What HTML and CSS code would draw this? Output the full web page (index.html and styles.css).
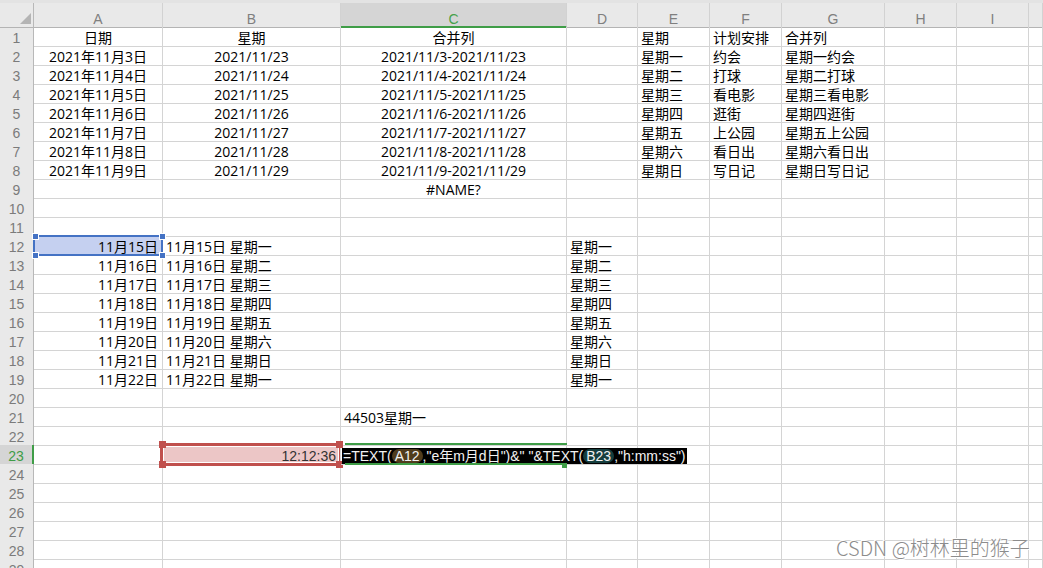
FILE: index.html
```html
<!DOCTYPE html>
<html lang="zh-CN">
<head>
<meta charset="utf-8">
<title>Sheet</title>
<link rel="stylesheet" href="styles.css">
</head>
<body>
<div class="sheet">
  <div class="topbar"></div>
  <div class="row head">
    <div class="hc corner"><svg class="tri" width="34" height="24" viewBox="0 0 34 24"><polygon points="31,10 31,21 20,21" fill="#b4b4b4"/></svg></div>
    <div class="hc">A</div><div class="hc">B</div><div class="hc sel">C</div><div class="hc">D</div><div class="hc">E</div><div class="hc">F</div><div class="hc">G</div><div class="hc">H</div><div class="hc">I</div><div class="hc"></div>
  </div>
  <div class="row"><div class="rh">1</div><div class="c ctr">日期</div><div class="c ctr">星期</div><div class="c ctr">合并列</div><div class="c"></div><div class="c">星期</div><div class="c">计划安排</div><div class="c">合并列</div><div class="c"></div><div class="c"></div><div class="c"></div></div>
  <div class="row"><div class="rh">2</div><div class="c ctr">2021年11月3日</div><div class="c ctr">2021/11/23</div><div class="c ctr">2021/11/3-2021/11/23</div><div class="c"></div><div class="c">星期一</div><div class="c">约会</div><div class="c">星期一约会</div><div class="c"></div><div class="c"></div><div class="c"></div></div>
  <div class="row"><div class="rh">3</div><div class="c ctr">2021年11月4日</div><div class="c ctr">2021/11/24</div><div class="c ctr">2021/11/4-2021/11/24</div><div class="c"></div><div class="c">星期二</div><div class="c">打球</div><div class="c">星期二打球</div><div class="c"></div><div class="c"></div><div class="c"></div></div>
  <div class="row"><div class="rh">4</div><div class="c ctr">2021年11月5日</div><div class="c ctr">2021/11/25</div><div class="c ctr">2021/11/5-2021/11/25</div><div class="c"></div><div class="c">星期三</div><div class="c">看电影</div><div class="c">星期三看电影</div><div class="c"></div><div class="c"></div><div class="c"></div></div>
  <div class="row"><div class="rh">5</div><div class="c ctr">2021年11月6日</div><div class="c ctr">2021/11/26</div><div class="c ctr">2021/11/6-2021/11/26</div><div class="c"></div><div class="c">星期四</div><div class="c">逛街</div><div class="c">星期四逛街</div><div class="c"></div><div class="c"></div><div class="c"></div></div>
  <div class="row"><div class="rh">6</div><div class="c ctr">2021年11月7日</div><div class="c ctr">2021/11/27</div><div class="c ctr">2021/11/7-2021/11/27</div><div class="c"></div><div class="c">星期五</div><div class="c">上公园</div><div class="c">星期五上公园</div><div class="c"></div><div class="c"></div><div class="c"></div></div>
  <div class="row"><div class="rh">7</div><div class="c ctr">2021年11月8日</div><div class="c ctr">2021/11/28</div><div class="c ctr">2021/11/8-2021/11/28</div><div class="c"></div><div class="c">星期六</div><div class="c">看日出</div><div class="c">星期六看日出</div><div class="c"></div><div class="c"></div><div class="c"></div></div>
  <div class="row"><div class="rh">8</div><div class="c ctr">2021年11月9日</div><div class="c ctr">2021/11/29</div><div class="c ctr">2021/11/9-2021/11/29</div><div class="c"></div><div class="c">星期日</div><div class="c">写日记</div><div class="c">星期日写日记</div><div class="c"></div><div class="c"></div><div class="c"></div></div>
  <div class="row"><div class="rh">9</div><div class="c"></div><div class="c"></div><div class="c ctr">#NAME?</div><div class="c"></div><div class="c"></div><div class="c"></div><div class="c"></div><div class="c"></div><div class="c"></div><div class="c"></div></div>
  <div class="row"><div class="rh">10</div><div class="c"></div><div class="c"></div><div class="c"></div><div class="c"></div><div class="c"></div><div class="c"></div><div class="c"></div><div class="c"></div><div class="c"></div><div class="c"></div></div>
  <div class="row"><div class="rh">11</div><div class="c"></div><div class="c"></div><div class="c"></div><div class="c"></div><div class="c"></div><div class="c"></div><div class="c"></div><div class="c"></div><div class="c"></div><div class="c"></div></div>
  <div class="row"><div class="rh">12</div><div class="c r selcell"><div class="selbox"><i class="h h1"></i><i class="h h2"></i><i class="h h3"></i><i class="h h4"></i></div><span class="txt">11月15日</span></div><div class="c">11月15日 星期一</div><div class="c"></div><div class="c">星期一</div><div class="c"></div><div class="c"></div><div class="c"></div><div class="c"></div><div class="c"></div><div class="c"></div></div>
  <div class="row"><div class="rh">13</div><div class="c r">11月16日</div><div class="c">11月16日 星期二</div><div class="c"></div><div class="c">星期二</div><div class="c"></div><div class="c"></div><div class="c"></div><div class="c"></div><div class="c"></div><div class="c"></div></div>
  <div class="row"><div class="rh">14</div><div class="c r">11月17日</div><div class="c">11月17日 星期三</div><div class="c"></div><div class="c">星期三</div><div class="c"></div><div class="c"></div><div class="c"></div><div class="c"></div><div class="c"></div><div class="c"></div></div>
  <div class="row"><div class="rh">15</div><div class="c r">11月18日</div><div class="c">11月18日 星期四</div><div class="c"></div><div class="c">星期四</div><div class="c"></div><div class="c"></div><div class="c"></div><div class="c"></div><div class="c"></div><div class="c"></div></div>
  <div class="row"><div class="rh">16</div><div class="c r">11月19日</div><div class="c">11月19日 星期五</div><div class="c"></div><div class="c">星期五</div><div class="c"></div><div class="c"></div><div class="c"></div><div class="c"></div><div class="c"></div><div class="c"></div></div>
  <div class="row"><div class="rh">17</div><div class="c r">11月20日</div><div class="c">11月20日 星期六</div><div class="c"></div><div class="c">星期六</div><div class="c"></div><div class="c"></div><div class="c"></div><div class="c"></div><div class="c"></div><div class="c"></div></div>
  <div class="row"><div class="rh">18</div><div class="c r">11月21日</div><div class="c">11月21日 星期日</div><div class="c"></div><div class="c">星期日</div><div class="c"></div><div class="c"></div><div class="c"></div><div class="c"></div><div class="c"></div><div class="c"></div></div>
  <div class="row"><div class="rh">19</div><div class="c r">11月22日</div><div class="c">11月22日 星期一</div><div class="c"></div><div class="c">星期一</div><div class="c"></div><div class="c"></div><div class="c"></div><div class="c"></div><div class="c"></div><div class="c"></div></div>
  <div class="row"><div class="rh">20</div><div class="c"></div><div class="c"></div><div class="c"></div><div class="c"></div><div class="c"></div><div class="c"></div><div class="c"></div><div class="c"></div><div class="c"></div><div class="c"></div></div>
  <div class="row"><div class="rh">21</div><div class="c"></div><div class="c"></div><div class="c">44503星期一</div><div class="c"></div><div class="c"></div><div class="c"></div><div class="c"></div><div class="c"></div><div class="c"></div><div class="c"></div></div>
  <div class="row"><div class="rh">22</div><div class="c"></div><div class="c"></div><div class="c"></div><div class="c"></div><div class="c"></div><div class="c"></div><div class="c"></div><div class="c"></div><div class="c"></div><div class="c"></div></div>
  <div class="row"><div class="rh act">23</div><div class="c"></div><div class="c r refcell"><div class="refbox"><i class="rhd r1"></i><i class="rhd r2"></i><i class="rhd r3"></i><i class="rhd r4"></i></div><span class="txt reftxt">12:12:36</span></div><div class="c edcell"><i class="gl gtop"></i><i class="gl gbot"></i><i class="gsq"></i><div class="editor">=TEXT(<span class="hlA">A12</span>,"e年m月d日")&amp;" "&amp;TEXT(<span class="hlB">B23</span>,"h:mm:ss")</div></div><div class="c"></div><div class="c"></div><div class="c"></div><div class="c"></div><div class="c"></div><div class="c"></div><div class="c"></div></div>
  <div class="row"><div class="rh">24</div><div class="c"></div><div class="c"></div><div class="c"></div><div class="c"></div><div class="c"></div><div class="c"></div><div class="c"></div><div class="c"></div><div class="c"></div><div class="c"></div></div>
  <div class="row"><div class="rh">25</div><div class="c"></div><div class="c"></div><div class="c"></div><div class="c"></div><div class="c"></div><div class="c"></div><div class="c"></div><div class="c"></div><div class="c"></div><div class="c"></div></div>
  <div class="row"><div class="rh">26</div><div class="c"></div><div class="c"></div><div class="c"></div><div class="c"></div><div class="c"></div><div class="c"></div><div class="c"></div><div class="c"></div><div class="c"></div><div class="c"></div></div>
  <div class="row"><div class="rh">27</div><div class="c"></div><div class="c"></div><div class="c"></div><div class="c"></div><div class="c"></div><div class="c"></div><div class="c"></div><div class="c"></div><div class="c"></div><div class="c"></div></div>
  <div class="row"><div class="rh">28</div><div class="c"></div><div class="c"></div><div class="c"></div><div class="c"></div><div class="c"></div><div class="c"></div><div class="c"></div><div class="c"></div><div class="c"></div><div class="c"></div></div>
  <div class="row"><div class="rh">29</div><div class="c"></div><div class="c"></div><div class="c"></div><div class="c"></div><div class="c"></div><div class="c"></div><div class="c"></div><div class="c"></div><div class="c"></div><div class="c"></div></div>
  <div class="watermark">CSDN @树林里的猴子</div>
</div>
</body>
</html>
```

FILE: styles.css
```css
* { box-sizing: border-box; margin: 0; padding: 0; }
html, body { margin: 0; background: #fff; }
body {
  font-family: "Liberation Sans", "Noto Sans CJK SC", sans-serif;
  font-size: 14px;
  color: #000;
  overflow: hidden;
}
.sheet {
  position: relative;
  width: 1043px;
  height: 568px;
  overflow: hidden;
}
.topbar {
  height: 3px;
  background: #e3e3e3;
}
.row {
  display: grid;
  grid-template-columns: 34px 129px 178px 226px 71px 72px 72px 103px 72px 72px 1fr;
  height: 19px;
}
.row.head { height: 24px; }

.hc {
  background: #e9e9e9;
  border-right: 1px solid #d2d2d2;
  border-bottom: 1px solid #b4b4b4;
  color: #7f7f7f;
  text-align: center;
  padding-top: 9px;
  line-height: 14px;
  font-size: 14px;
}
.hc.corner {
  position: relative;
  padding: 0;
  border-right: 1px solid #b8b8b8;
}
.tri { display: block; }
.hc.sel {
  background: #d5d5d5;
  color: #45a14b;
  border-bottom: 2px solid #3f9d47;
}

.rh {
  background: #e9e9e9;
  border-right: 1px solid #b8b8b8;
  border-bottom: 1px solid #cfcfcf;
  color: #7b7b7b;
  text-align: center;
  padding-top: 3px;
  line-height: 16px;
}
.rh.act {
  background: #d5d5d5;
  color: #3f9d47;
  border-right: 2px solid #3f9d47;
}

.c {
  position: relative;
  font-family: "Open Sans", "Noto Sans CJK SC", sans-serif;
  border-right: 1px solid #d4d4d4;
  border-bottom: 1px solid #d4d4d4;
  padding: 3px 3px 0 3px;
  line-height: 16px;
  white-space: nowrap;
}
.c.ctr { text-align: center; }
.c.r { text-align: right; padding-right: 4px; }

.txt { position: relative; z-index: 2; }

/* A12 selection */
.selbox {
  position: absolute;
  left: -1px;
  top: -1px;
  width: 130px;
  height: 21px;
  border: 2px solid #4472c4;
  background: #c5d0f0;
  z-index: 1;
}
.h {
  position: absolute;
  width: 5px;
  height: 5px;
  background: #4472c4;
  border: 1px solid #fff;
  box-sizing: content-box;
}
.h1 { left: -3px; top: -4px; }
.h2 { right: -5px; top: -4px; }
.h3 { left: -3px; bottom: -5px; }
.h4 { right: -5px; bottom: -5px; }

/* B23 reference box */
.refbox {
  position: absolute;
  left: -3px;
  top: -2px;
  width: 180px;
  height: 23px;
  border: 3px solid #c0504d;
  border-right-width: 1px;
  background: #ecc6c6;
  box-shadow: inset 0 0 0 1px #fff;
  z-index: 1;
}
.rhd {
  position: absolute;
  width: 7px;
  height: 7px;
  background: #c0504d;
}
.r1 { left: -4px; top: -5px; }
.r2 { right: -4px; top: -5px; }
.r3 { left: -4px; bottom: -5px; }
.r4 { right: -4px; bottom: -5px; }
.reftxt { color: #333; font-family: "Liberation Sans", sans-serif; }

/* C23 edit box */
.edcell { z-index: 3; }
.editor {
  position: absolute;
  left: 1px;
  top: 3px;
  height: 16px;
  line-height: 16px;
  padding: 0 1px;
  background: #000;
  color: #f2f2f2;
  font-family: "Liberation Sans", "Noto Sans CJK SC", sans-serif;
  white-space: nowrap;
  z-index: 2;
}
.hlA, .hlB {
  display: inline-block;
  padding: 0 3px;
  border-radius: 7px;
  line-height: 14px;
}
.hlA { background: #503c1c; }
.hlB { background: #153e3e; }
.gl {
  position: absolute;
  height: 2px;
  background: #3f9d47;
  z-index: 3;
}
.gtop { left: 4px; top: -2px; width: 222px; }
.gbot { left: 4px; top: 18px; width: 217px; }
.gsq {
  position: absolute;
  left: 221px;
  top: 18px;
  width: 5px;
  height: 5px;
  background: #3f9d47;
  z-index: 3;
}

.watermark {
  position: absolute;
  left: 836px;
  top: 538px;
  font-family: "Noto Sans CJK SC", sans-serif;
  font-size: 20px;
  line-height: 20px;
  font-weight: 300;
  color: #8c8c8c;
  text-shadow: 1px 1px 0 #fff, -1px -1px 0 #fff;
  white-space: nowrap;
  z-index: 5;
}
```
